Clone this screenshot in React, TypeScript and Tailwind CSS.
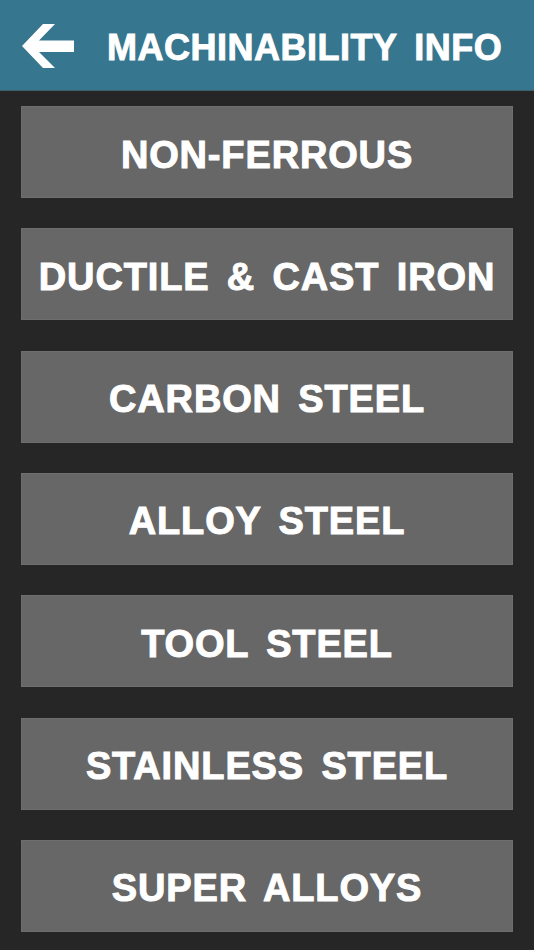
import React from "react";

const items = [
  "NON-FERROUS",
  "DUCTILE & CAST IRON",
  "CARBON STEEL",
  "ALLOY STEEL",
  "TOOL STEEL",
  "STAINLESS STEEL",
  "SUPER ALLOYS",
];

export default function App() {
  return (
    <div
      className="w-[534px] h-[950px] bg-[#262626] flex flex-col overflow-hidden"
      style={{ fontFamily: '"Liberation Sans", Arial, sans-serif' }}
    >
      <div className="h-[91px] shrink-0 bg-[#36768f] flex items-center border-b border-[#3f5f6c]">
        <div className="w-[107px] shrink-0 flex items-center">
          <svg width="107" height="91" viewBox="0 0 107 91">
            <polygon
              points="22,46 43,24 55,24 39,40.5 74,40.5 74,52 39,52 55,68 43,68"
              fill="#ffffff"
            />
          </svg>
        </div>
        <div className="text-white font-bold text-[36px] leading-none tracking-[0.5px] [word-spacing:7px] whitespace-nowrap pt-[6px] [-webkit-text-stroke:0.9px_white]">
          MACHINABILITY INFO
        </div>
      </div>
      <div className="flex flex-col gap-[30.33px] px-[21px] pt-[15px]">
        {items.map((t) => (
          <div
            key={t}
            className="h-[92px] bg-[#676767] border border-[#6e6e6e] flex items-center justify-center"
          >
            <span className="text-white font-bold text-[38px] leading-none tracking-[0.85px] [word-spacing:6px] whitespace-nowrap pt-[5px] [-webkit-text-stroke:1px_white]">
              {t}
            </span>
          </div>
        ))}
      </div>
    </div>
  );
}
